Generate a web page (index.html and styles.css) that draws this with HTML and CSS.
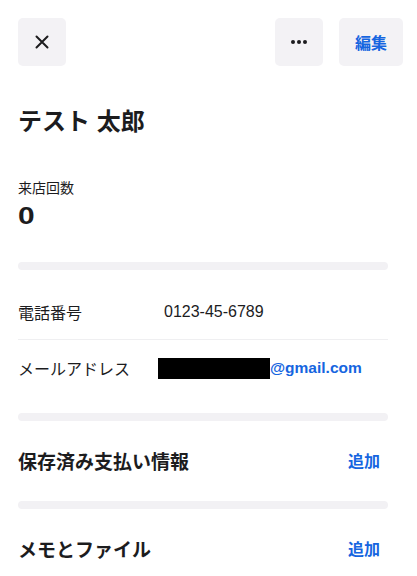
FILE: index.html
```html
<!DOCTYPE html>
<html lang="ja">
<head>
<meta charset="utf-8">
<link rel="stylesheet" href="styles.css">
</head>
<body>
<header class="topbar">
  <button class="icon-btn" aria-label="閉じる">
    <svg width="14" height="14" viewBox="0 0 14 14"><path d="M1.5 1.5 L12.5 12.5 M12.5 1.5 L1.5 12.5" stroke="#1c1c1e" stroke-width="2" stroke-linecap="round" fill="none"/></svg>
  </button>
  <div class="spacer"></div>
  <button class="icon-btn" aria-label="その他">
    <svg width="16" height="4" viewBox="0 0 16 4"><circle cx="2" cy="2" r="2" fill="#1c1c1e"/><circle cx="8" cy="2" r="2" fill="#1c1c1e"/><circle cx="14" cy="2" r="2" fill="#1c1c1e"/></svg>
  </button>
  <button class="text-btn">編集</button>
</header>

<main class="content">
  <h1 class="name">テスト 太郎</h1>

  <div class="stat">
    <div class="stat-label">来店回数</div>
    <div class="stat-value"><span class="stat-num">0</span></div>
  </div>

  <div class="bar"></div>

  <div class="info">
    <div class="row divided">
      <span class="row-label">電話番号</span>
      <span class="row-value">0123-45-6789</span>
    </div>
    <div class="row">
      <span class="row-label">メールアドレス</span>
      <span class="row-value"><span class="redact"></span><span class="email">@gmail.com</span></span>
    </div>
  </div>

  <div class="bar"></div>

  <div class="section">
    <h2 class="section-title">保存済み支払い情報</h2>
    <span class="link">追加</span>
  </div>

  <div class="bar"></div>

  <div class="section">
    <h2 class="section-title">メモとファイル</h2>
    <span class="link">追加</span>
  </div>
</main>
</body>
</html>
```

FILE: styles.css
```css
* { box-sizing: border-box; }

html, body {
  margin: 0;
  padding: 0;
  background: #fff;
  color: #1c1c1e;
  font-family: "Liberation Sans", "Noto Sans CJK JP", sans-serif;
}

.topbar {
  display: flex;
  align-items: center;
  gap: 16px;
  padding: 18px 14px 0 18px;
}

.spacer { flex: 1; }

.icon-btn,
.text-btn {
  height: 48px;
  border: none;
  border-radius: 5px;
  background: #f3f2f5;
  display: flex;
  align-items: center;
  justify-content: center;
  padding: 0;
  font-family: inherit;
}

.icon-btn { width: 48px; }

.text-btn {
  width: 64px;
  color: #1565e0;
  font-size: 16px;
  font-weight: 700;
}

.content {
  padding: 0 29px 0 18px;
}

.name {
  margin: 40px 0 0;
  font-size: 24px;
  line-height: 32px;
  font-weight: 700;
}

.stat {
  margin-top: 40px;
}

.stat-label {
  font-size: 14px;
  line-height: 20px;
}

.stat-value {
  margin-top: 3px;
  font-size: 23px;
  line-height: 30px;
  font-weight: 700;
}

.stat-num {
  display: inline-block;
  transform: scaleX(1.3);
  transform-origin: left center;
}

.bar {
  height: 8px;
  border-radius: 4px;
  background: #f2f1f4;
}

.stat + .bar { margin-top: 31px; }

.info {
  padding: 14px 0 17px;
}

.row {
  display: flex;
  align-items: center;
  height: 56px;
  font-size: 16px;
}

.row.divided {
  border-bottom: 1px solid #efeff1;
}

.row-label {
  width: 146px;
  flex-shrink: 0;
}

.row-value {
  display: flex;
  align-items: center;
}

.redact {
  display: inline-block;
  width: 112px;
  height: 21px;
  background: #000;
  margin-left: -6px;
}

.email {
  color: #1565e0;
  font-weight: 700;
  font-size: 15.5px;
}

.section {
  display: flex;
  align-items: center;
  justify-content: space-between;
  height: 56px;
  padding-bottom: 2px;
  margin: 12px 0;
}

.section-title {
  margin: 0;
  font-size: 19px;
  font-weight: 700;
}

.link {
  color: #1565e0;
  font-size: 16px;
  font-weight: 700;
  margin-right: 8px;
}
```
